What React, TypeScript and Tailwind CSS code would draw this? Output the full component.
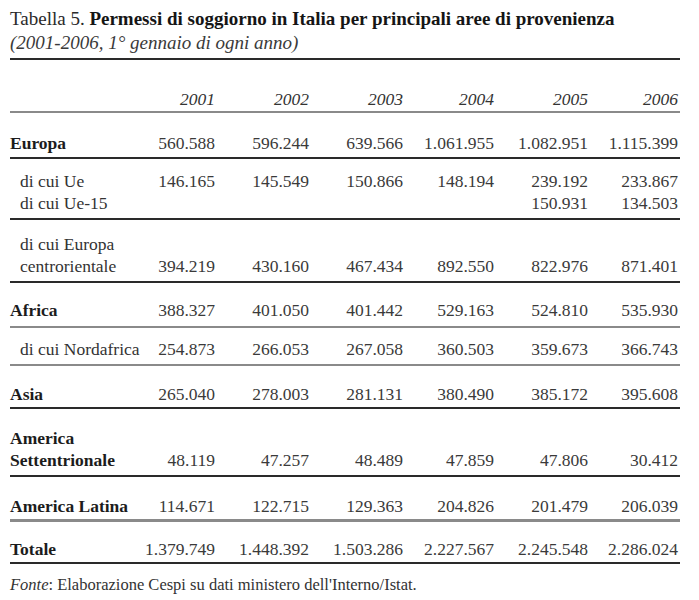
const cols = "grid grid-cols-[135px_70px_94px_94px_91px_94px_90px] pr-[2px]";

type RowProps = {
  label: React.ReactNode;
  values: React.ReactNode[];
  bold?: boolean;
  indent?: boolean;
  bottom?: boolean;
  line: string;
  pad: string;
};

function Row({ label, values, bold, indent, bottom, line, pad }: RowProps) {
  return (
    <div className={`${cols} ${line} ${pad}`}>
      <div
        className={`whitespace-nowrap ${indent ? "pl-[10px] text-[#333]" : ""} ${
          bold ? "font-bold text-[#1c1c1c]" : ""
        }`}
      >
        {label}
      </div>
      {values.map((v, i) => (
        <div
          key={i}
          className={`text-right text-[#3a3a3a] ${bottom ? "self-end" : ""}`}
        >
          {v}
        </div>
      ))}
    </div>
  );
}

const dark = "border-b-2 border-[#2a2a2a]";
const grey = "border-b-2 border-[#8a8a8a]";

export default function App() {
  return (
    <div
      className="min-h-[600px] w-[699px] bg-white pl-[10px] pt-[7px] text-[17.5px] leading-[22px]"
      style={{ fontFamily: "'Liberation Serif', 'Times New Roman', serif" }}
    >
      <div className="w-[670px]">
        <p className="text-[19px] leading-[24px] text-[#2a2a2a]">
          Tabella 5. <span className="font-bold text-[#151515]">Permessi di soggiorno in Italia per principali aree di provenienza</span>
        </p>
        <p className="text-[19px] italic leading-[24px] text-[#3a3a3a]">
          (2001-2006, 1° gennaio di ogni anno)
        </p>

        <div className="mt-[3px] border-t-2 border-[#2a2a2a]" />

        <div className={`${cols} ${grey} pt-[28px] pb-[1px] italic text-[#333]`}>
          <div />
          {["2001", "2002", "2003", "2004", "2005", "2006"].map((y) => (
            <div key={y} className="text-right">
              {y}
            </div>
          ))}
        </div>

        <Row
          bold
          label="Europa"
          values={["560.588", "596.244", "639.566", "1.061.955", "1.082.951", "1.115.399"]}
          line={dark}
          pad="pt-[19px] pb-[3px]"
        />
        <Row
          indent
          label={
            <>
              di cui Ue
              <br />
              di cui Ue-15
            </>
          }
          values={[
            "146.165",
            "145.549",
            "150.866",
            "148.194",
            <>
              239.192
              <br />
              150.931
            </>,
            <>
              233.867
              <br />
              134.503
            </>,
          ]}
          line={dark}
          pad="pt-[11px] pb-[4px]"
        />
        <Row
          indent
          bottom
          label={
            <>
              di cui Europa
              <br />
              centrorientale
            </>
          }
          values={["394.219", "430.160", "467.434", "892.550", "822.976", "871.401"]}
          line={dark}
          pad="pt-[13px] pb-[4px]"
        />
        <Row
          bold
          label="Africa"
          values={["388.327", "401.050", "401.442", "529.163", "524.810", "535.930"]}
          line={grey}
          pad="pt-[16px] pb-[5px]"
        />
        <Row
          indent
          label="di cui Nordafrica"
          values={["254.873", "266.053", "267.058", "360.503", "359.673", "366.743"]}
          line={grey}
          pad="pt-[10px] pb-[4px]"
        />
        <Row
          bold
          label="Asia"
          values={["265.040", "278.003", "281.131", "380.490", "385.172", "395.608"]}
          line={dark}
          pad="pt-[17px] pb-[2px]"
        />
        <Row
          bold
          bottom
          label={
            <>
              America
              <br />
              Settentrionale
            </>
          }
          values={["48.119", "47.257", "48.489", "47.859", "47.806", "30.412"]}
          line={dark}
          pad="pt-[18px] pb-[4px]"
        />
        <Row
          bold
          label="America Latina"
          values={["114.671", "122.715", "129.363", "204.826", "201.479", "206.039"]}
          line="border-b-[3px] border-[#8a8a8a]"
          pad="pt-[18px] pb-[2px]"
        />
        <Row
          bold
          label="Totale"
          values={["1.379.749", "1.448.392", "1.503.286", "2.227.567", "2.245.548", "2.286.024"]}
          line={dark}
          pad="pt-[16px] pb-[2px]"
        />

        <p className="pt-[11px] text-[16.5px] leading-[20px] text-[#333]">
          <span className="italic">Fonte</span>: Elaborazione Cespi su dati ministero dell'Interno/Istat.
        </p>
      </div>
    </div>
  );
}
